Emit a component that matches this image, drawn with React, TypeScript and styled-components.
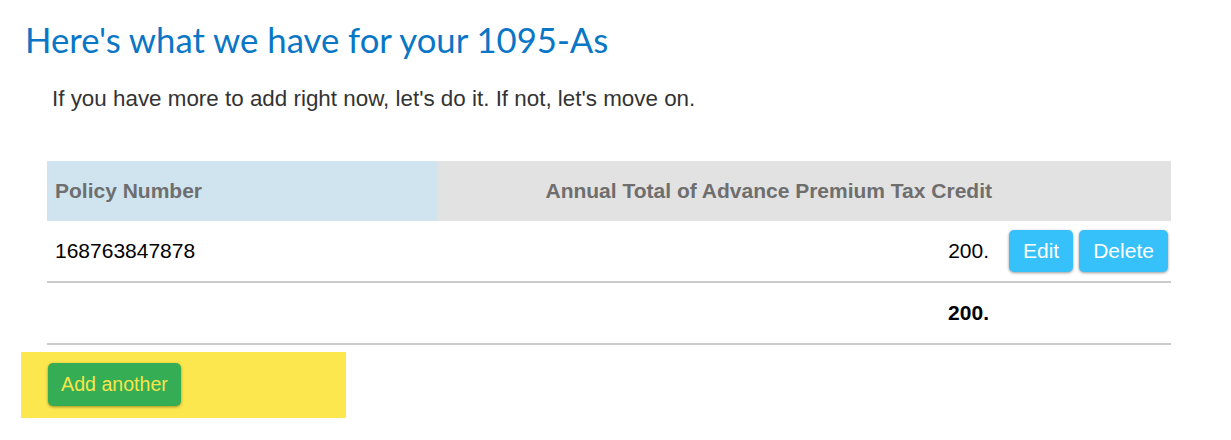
import React, { FC } from 'react';
import styled, { createGlobalStyle } from 'styled-components';

const GlobalStyle = createGlobalStyle`
	body {
		margin: 0;
		background: #ffffff;
		font-family: 'Liberation Sans', Arial, sans-serif;
	}
`;

type Policy = { number: string; credit: string };

const policies: Policy[] = [{ number: '168763847878', credit: '200.' }];

const Page = styled.div`
	width: 1231px;
	height: 440px;
	overflow: hidden;
	padding-top: 18px;
	box-sizing: border-box;
`;

const Heading = styled.h1`
	margin: 0 0 0 25px;
	font-family: Lato, 'Open Sans', sans-serif;
	font-weight: 400;
	font-size: 34.7px;
	line-height: 44px;
	color: #0a76c6;
`;

const Intro = styled.p`
	margin: 22px 0 0 52px;
	font-size: 22.4px;
	line-height: 30px;
	color: #333333;
`;

const Table = styled.div`
	display: grid;
	grid-template-columns: 390px 563px 171px;
	margin: 47px 0 0 47px;
	width: 1124px;
`;

const HeadCell = styled.div<{ $tint: string; $align?: string }>`
	height: 60px;
	display: flex;
	align-items: center;
	justify-content: ${(p) => p.$align || 'flex-start'};
	padding: 0 8px;
	background: ${(p) => p.$tint};
	font-weight: bold;
	font-size: 21px;
	color: #6e6e6e;
`;

const Cell = styled.div<{ $align?: string; $bold?: boolean }>`
	height: 60px;
	display: flex;
	align-items: center;
	justify-content: ${(p) => p.$align || 'flex-start'};
	padding: 0 ${(p) => (p.$align ? '11px' : '8px')} 0 8px;
	border-bottom: 2px solid #cbcbcb;
	font-size: 21px;
	font-weight: ${(p) => (p.$bold ? 'bold' : 'normal')};
	color: #000000;
`;

const Actions = styled(Cell)`
	padding: 0 0 0 9px;
	gap: 6px;
`;

const RowButton = styled.button`
	height: 42px;
	padding: 0 14px;
	border: none;
	border-radius: 5px;
	background: #37c1fb;
	color: #ffffff;
	font-family: 'Liberation Sans', Arial, sans-serif;
	font-size: 21px;
	box-shadow: 0 1px 3px rgba(0, 0, 0, 0.4);
	cursor: pointer;
`;

const AddBar = styled.div`
	width: 325px;
	height: 66px;
	margin: 7px 0 0 21px;
	padding: 11px 0 0 27px;
	box-sizing: border-box;
	background: #fde74f;
`;

const AddButton = styled.button`
	height: 43px;
	width: 133px;
	border: none;
	border-radius: 5px;
	background: #34ad55;
	color: #f9e44b;
	font-family: 'Liberation Sans', Arial, sans-serif;
	font-size: 19.6px;
	box-shadow: 0 1px 3px rgba(80, 70, 0, 0.55);
	cursor: pointer;
`;

const App: FC = () => {
	const total = policies.reduce((sum, p) => sum + parseFloat(p.credit), 0);

	return (
		<Page>
			<GlobalStyle />
			<Heading>Here's what we have for your 1095-As</Heading>
			<Intro>If you have more to add right now, let's do it. If not, let's move on.</Intro>
			<Table>
				<HeadCell $tint="#cfe4ef">Policy Number</HeadCell>
				<HeadCell $tint="#e2e2e2" $align="flex-end">
					Annual Total of Advance Premium Tax Credit
				</HeadCell>
				<HeadCell $tint="#e2e2e2" />
				{policies.map((p) => (
					<React.Fragment key={p.number}>
						<Cell>{p.number}</Cell>
						<Cell $align="flex-end">{p.credit}</Cell>
						<Actions>
							<RowButton>Edit</RowButton>
							<RowButton>Delete</RowButton>
						</Actions>
					</React.Fragment>
				))}
				<Cell />
				<Cell $align="flex-end" $bold>
					{total}.
				</Cell>
				<Cell />
			</Table>
			<AddBar>
				<AddButton>Add another</AddButton>
			</AddBar>
		</Page>
	);
};

export default App;
